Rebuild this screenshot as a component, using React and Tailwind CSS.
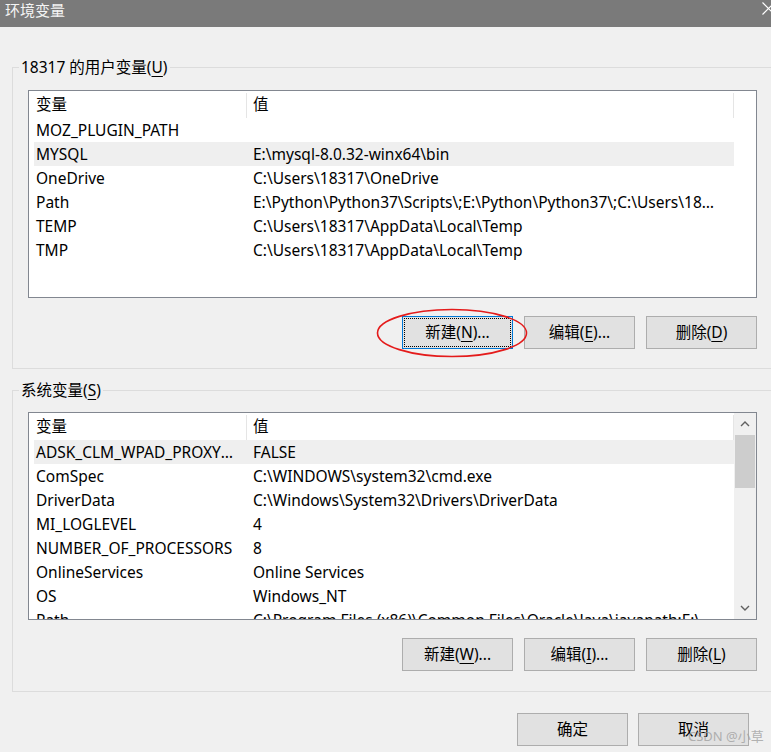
import React from 'react';

// 用户变量 / 系统变量 rows
const userVars = [
  ['MOZ_PLUGIN_PATH', ''],
  ['MYSQL', 'E:\\mysql-8.0.32-winx64\\bin'],
  ['OneDrive', 'C:\\Users\\18317\\OneDrive'],
  ['Path', 'E:\\Python\\Python37\\Scripts\\;E:\\Python\\Python37\\;C:\\Users\\18317\\AppData\\Local\\Microsoft\\WindowsApps'],
  ['TEMP', 'C:\\Users\\18317\\AppData\\Local\\Temp'],
  ['TMP', 'C:\\Users\\18317\\AppData\\Local\\Temp'],
];

const sysVars = [
  ['ADSK_CLM_WPAD_PROXY_CHECK', 'FALSE'],
  ['ComSpec', 'C:\\WINDOWS\\system32\\cmd.exe'],
  ['DriverData', 'C:\\Windows\\System32\\Drivers\\DriverData'],
  ['MI_LOGLEVEL', '4'],
  ['NUMBER_OF_PROCESSORS', '8'],
  ['OnlineServices', 'Online Services'],
  ['OS', 'Windows_NT'],
  ['Path', 'C:\\Program Files (x86)\\Common Files\\Oracle\\Java\\javapath;E:\\VMware\\bin'],
];

const Chevron = ({ down }) => (
  <svg width="10" height="6" viewBox="0 0 10 6" className="text-[#606060]">
    <path
      d={down ? 'M1 1 L5 5 L9 1' : 'M1 5 L5 1 L9 5'}
      fill="none"
      stroke="currentColor"
      strokeWidth="1.4"
    />
  </svg>
);

const ListView = ({ rows, selected, scroll }) => (
  <div className="w-[729px] h-[208px] border border-[#828790] bg-white flex overflow-hidden">
    <div className="w-[705px] flex flex-col">
      <div className="h-[27px] pt-px flex items-center shrink-0">
        <div className="w-[217px] pl-[7px]">变量</div>
        <div className="w-px h-[25px] bg-[#e5e5e5]" />
        <div className="w-[486px] pl-[6px]">值</div>
        <div className="w-px h-[25px] bg-[#e5e5e5]" />
      </div>
      {rows.map(([name, value], i) => (
        <div
          key={name + i}
          className={`ml-[5px] h-[24px] pt-[2px] shrink-0 flex items-center ${i === selected ? 'bg-[#efefef]' : ''}`}
        >
          <div className="w-[212px] pl-[2px] pr-[7px] truncate">{name}</div>
          <div className="flex-1 min-w-0 pl-[7px] pr-[18px] truncate">{value}</div>
        </div>
      ))}
    </div>
    {scroll ? (
      <div className="w-[22px] bg-[#f0f0f0] flex flex-col">
        <div className="h-[22px] flex items-center justify-center">
          <Chevron />
        </div>
        <div className="h-[53px] mx-[1px] bg-[#cdcdcd]" />
        <div className="flex-1" />
        <div className="h-[22px] flex items-center justify-center">
          <Chevron down />
        </div>
      </div>
    ) : (
      <div className="w-[22px]" />
    )}
  </div>
);

const Button = ({ children, focused }) => (
  <button
    className={`w-[111px] h-[33px] bg-[#e1e1e1] border leading-none ${
      focused
        ? 'border-[#0078d7] outline-1 outline-dotted outline-black outline-offset-[-3px]'
        : 'border-[#adadad]'
    }`}
  >
    {children}
  </button>
);

const Key = ({ children }) => <u className="underline-offset-[3px]">{children}</u>;

const Group = ({ label, rows, selected, scroll, buttons, top, pt, pb }) => (
  <fieldset className={`ml-[12px] w-[772px] border border-[#dcdcdc] ${top} ${pt} ${pb} pl-[15px]`}>
    <legend className="ml-[-9px] px-[2px] leading-[20px]">{label}</legend>
    <ListView rows={rows} selected={selected} scroll={scroll} />
    <div className="w-[729px] mt-[18px] flex justify-end gap-[11px]">{buttons}</div>
  </fieldset>
);

export default function App() {
  return (
    <div className="relative w-[771px] h-[752px] overflow-hidden bg-[#f0f0f0] text-[15.5px] text-black font-['Noto_Sans','Noto_Sans_CJK_SC',sans-serif]">
      {/* title bar */}
      <div className="h-[27px] bg-[#7a7a7a] flex items-start">
        <span className="ml-[5px] mt-[1px] text-[15px] leading-[18px] text-[#f4f4f4] font-['Noto_Sans_CJK_SC',sans-serif]">环境变量</span>
        <svg width="13" height="13" viewBox="0 0 13 13" className="ml-auto mr-[-4px] mt-[2px] text-white">
          <path d="M0.5 0.5 L12.5 12.5 M12.5 0.5 L0.5 12.5" stroke="currentColor" strokeWidth="1.2" />
        </svg>
      </div>

      <Group
        label={<>18317 的用户变量(<Key>U</Key>)</>}
        rows={userVars}
        selected={1}
        top="mt-[30px]"
        pt="pt-[13px]"
        pb="pb-[19px]"
        buttons={[
          <Button key="n" focused>新建(<Key>N</Key>)...</Button>,
          <Button key="e">编辑(<Key>E</Key>)...</Button>,
          <Button key="d">删除(<Key>D</Key>)</Button>,
        ]}
      />

      <Group
        label={<>系统变量(<Key>S</Key>)</>}
        rows={sysVars}
        selected={0}
        scroll
        top="mt-[11px]"
        pt="pt-[12px]"
        pb="pb-[20px]"
        buttons={[
          <Button key="w">新建(<Key>W</Key>)...</Button>,
          <Button key="i">编辑(<Key>I</Key>)...</Button>,
          <Button key="l">删除(<Key>L</Key>)</Button>,
        ]}
      />

      <div className="mt-[21px] pr-[22px] flex justify-end gap-[10px]">
        <Button>确定</Button>
        <Button>取消</Button>
      </div>

      {/* red annotation circle around 新建 */}
      <svg className="absolute left-[376px] top-[308px]" width="152" height="50" viewBox="0 0 152 50">
        <ellipse cx="76" cy="25" rx="74.5" ry="23.5" fill="none" stroke="#e41b1b" strokeWidth="1.6" />
      </svg>

      {/* watermark */}
      <div className="absolute left-[688px] top-[727px] text-[13px] text-[#a0a0a0]/80 leading-[18px]">CSDN @小草</div>
    </div>
  );
}
